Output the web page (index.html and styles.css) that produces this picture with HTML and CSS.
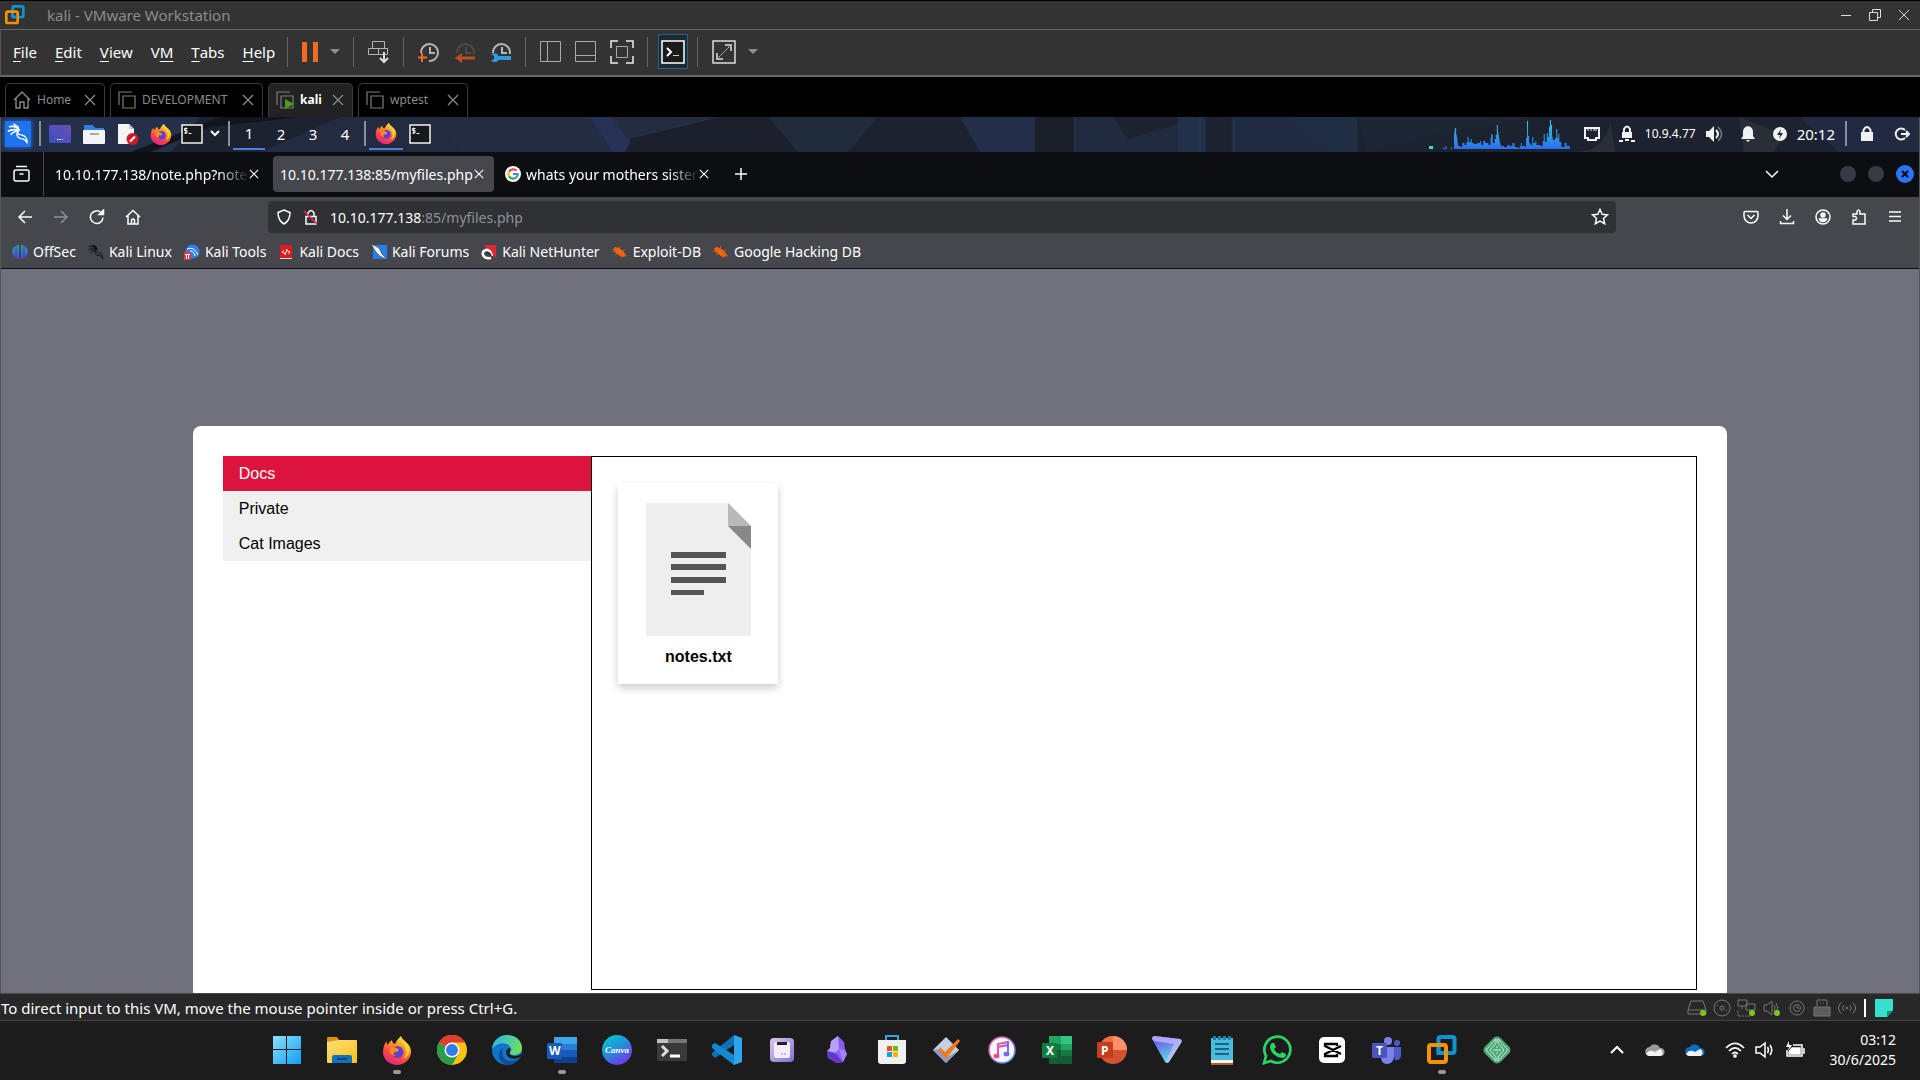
FILE: index.html
```html
<!DOCTYPE html>
<html lang="en">
<head>
  <meta charset="utf-8">
  <title>kali - VMware Workstation</title>
  <link rel="stylesheet" href="styles.css">
</head>
<body>
  <!-- shared icons -->
  <svg class="sprite" aria-hidden="true">
    <defs>
      <linearGradient id="fox-body" x1="0.8" y1="0" x2="0.3" y2="1">
        <stop offset="0" stop-color="#fff04a"/>
        <stop offset="0.35" stop-color="#ff9a1f"/>
        <stop offset="0.7" stop-color="#ff4345"/>
        <stop offset="1" stop-color="#e0208a"/>
      </linearGradient>
      <linearGradient id="cpu" x1="0" y1="0" x2="0" y2="1">
        <stop offset="0" stop-color="#35d3d6"/>
        <stop offset="1" stop-color="#2a6ff0"/>
      </linearGradient>
      <linearGradient id="win" x1="0" y1="0" x2="1" y2="1">
        <stop offset="0" stop-color="#8be0fb"/>
        <stop offset="1" stop-color="#119df3"/>
      </linearGradient>
      <linearGradient id="folder" x1="0" y1="0" x2="1" y2="1">
        <stop offset="0" stop-color="#ffe07a"/>
        <stop offset="1" stop-color="#fcbf18"/>
      </linearGradient>
      <linearGradient id="edge-top" x1="0" y1="0.3" x2="1" y2="0.6">
        <stop offset="0" stop-color="#2bb6ea"/>
        <stop offset="1" stop-color="#6fe05a"/>
      </linearGradient>
      <linearGradient id="canva" x1="0.2" y1="0" x2="0.8" y2="1">
        <stop offset="0" stop-color="#00c9cc"/>
        <stop offset="0.5" stop-color="#2a86dd"/>
        <stop offset="1" stop-color="#7d2ae8"/>
      </linearGradient>
      <linearGradient id="lilac" x1="0" y1="0" x2="1" y2="1">
        <stop offset="0" stop-color="#e2c8ee"/>
        <stop offset="1" stop-color="#7d6fd0"/>
      </linearGradient>
      <linearGradient id="tunes" x1="0" y1="0" x2="1" y2="1">
        <stop offset="0" stop-color="#fb5b89"/>
        <stop offset="0.6" stop-color="#8d5bdc"/>
        <stop offset="1" stop-color="#3ea6f2"/>
      </linearGradient>
      <linearGradient id="proton" x1="0.2" y1="0" x2="0.6" y2="1">
        <stop offset="0" stop-color="#6d4aff"/>
        <stop offset="1" stop-color="#5fe6d0"/>
      </linearGradient>
      <linearGradient id="desk" x1="0" y1="1" x2="1" y2="0">
        <stop offset="0" stop-color="#3b4fc0"/>
        <stop offset="1" stop-color="#6b4fb8"/>
      </linearGradient>
      <linearGradient id="offsec" x1="0" y1="0" x2="0" y2="1">
        <stop offset="0" stop-color="#1fa7b0"/>
        <stop offset="1" stop-color="#5a3fd0"/>
      </linearGradient>
      <symbol id="i-vmware" viewBox="0 0 30 30">
        <rect x="11.500" y="2" width="16" height="16" rx="2" fill="none" stroke="#0f94d2" stroke-width="4"/>
        <rect x="2" y="10" width="17" height="17" rx="2" fill="none" stroke="#f39109" stroke-width="4"/>
        <path d="M11.500 12v6H17" fill="none" stroke="#0f94d2" stroke-width="4"/>
      </symbol>
      <symbol id="i-firefox" viewBox="0 0 30 30">
        <path d="M19 1c1 3 3 4 6 7 3 3 4.500 6 4 10-1 7-7 12-14 12S1.500 25 1 18c-.3-5 1.500-9 3.500-12 0 2 .5 3 1.500 4 1-3 3-4 4-5 0 2 1 3.500 3 4 2-4 3-5 6-8z" fill="url(#fox-body)"/>
        <circle cx="15.500" cy="17" r="6" fill="#5b3fd6"/>
        <path d="M8 13c3-1.500 6-1 8 1 2 1.500 0 3-3 3-2 0-2 3 1 4-4 0-7-3-6-8z" fill="#ff8a1e"/>
        <path d="M20 4c0 6 4 7 4 13 0 3-1 5-3 7 6-2 8-8 6-13-2-4-6-4-7-7z" fill="#ffd93b" opacity=".75"/>
      </symbol>
      <symbol id="i-term" viewBox="0 0 22 20">
        <rect x="1" y="1" width="20" height="18" fill="#16181a" stroke="#f2f2f2" stroke-width="1.500"/>
        <path d="M6.500 4.500h-3v2h2.500v2.500H3.300M4.800 3.500v6.500M7.500 9.500h3" fill="none" stroke="#f2f2f2"/>
      </symbol>
      <symbol id="i-x" viewBox="0 0 12 12">
        <path d="M1 1l10 10M11 1L1 11" fill="none" stroke="currentColor" stroke-width="1.300"/>
      </symbol>
      <symbol id="i-down" viewBox="0 0 12 8">
        <path d="M0 1h12L6 7z" fill="#8f8f8f"/>
      </symbol>
      <symbol id="i-vm" viewBox="0 0 18 18">
        <path d="M14 1H1v13M5 5h12v12H5z" fill="none" stroke="#7c7c7c" stroke-width="1.200"/>
      </symbol>
      <symbol id="i-clock" viewBox="0 0 22 22">
        <path d="M3 12a8.500 8.500 0 1 1 8 8M12 6v6h5" fill="none" stroke="currentColor" stroke-width="2"/>
      </symbol>
      <symbol id="i-bug" viewBox="0 0 16 16">
        <path d="M1 5l2-2 4 1 4 3 3 4-2 2-4-1-4-3z" fill="#f0640f"/>
        <path d="M0 7l4 1M3 11l3-2M13 5l-2 2M15 12l-3-1M10 14l-1-3M8 2L7 5" stroke="#d9580c" fill="none"/>
      </symbol>
      <symbol id="i-dragon" viewBox="0 0 24 24">
        <path d="M2 4c5-1 9 0 12 4M1 9c5-3 9-2 13-1M4 13c2-3 5-4 8-4M7 1l6 4" fill="none" stroke="currentColor" stroke-width="1.700"/>
        <path d="M13 8c-3 2-1 5 3 5 4 1 6 4 6 9-2-4-4-5-7-5-4-1-6-5-2-9z" fill="none" stroke="currentColor" stroke-width="1.500"/>
      </symbol>
      <symbol id="i-cloud" viewBox="0 0 20 14">
        <path d="M5 13a4.500 4.500 0 0 1-.5-9A6 6 0 0 1 15 5a4 4 0 0 1 1 8z" fill="currentColor"/>
        <path d="M1 11c2-3 4-4 7-3l2 1 5-3a4 4 0 0 1 1 7H5c-2 0-3-.5-4-2z" class="cloud-front"/>
      </symbol>
      <symbol id="i-sound" viewBox="0 0 20 18">
        <path d="M1 6h4l5-4v14l-5-4H1z" fill="none" stroke="currentColor" stroke-width="1.500"/>
        <path d="M12.500 6q2 3 0 6M15 4q3.500 5 0 10" fill="none" stroke="currentColor" stroke-width="1.500"/>
      </symbol>
    </defs>
  </svg>

  <header class="titlebar">
    <svg class="logo"><use href="#i-vmware"/></svg>
    <span>kali - VMware Workstation</span>
    <div class="window-buttons">
      <button aria-label="Minimize"><svg width="12" height="12"><path d="M1 6.500h10" stroke="#ddd"/></svg></button>
      <button aria-label="Restore"><svg width="12" height="12" fill="none" stroke="#ddd"><path d="M3.500 3V.5h8v8H9M.5 3.500h8v8h-8z"/></svg></button>
      <button aria-label="Close"><svg width="12" height="12" fill="none" stroke="#ddd"><path d="M1 1l10 10M11 1L1 11"/></svg></button>
    </div>
  </header>

  <nav class="toolbar">
    <div class="menu">
      <button><u>F</u>ile</button>
      <button><u>E</u>dit</button>
      <button><u>V</u>iew</button>
      <button>V<u>M</u></button>
      <button><u>T</u>abs</button>
      <button><u>H</u>elp</button>
    </div>
    <div class="tools">
      <button aria-label="Pause"><svg width="16" height="20" fill="#f26a1b"><path d="M0 0h5v20H0zM11 0h5v20h-5z"/></svg></button>
      <button class="drop" aria-label="Power options"><svg width="10" height="7"><use href="#i-down"/></svg></button>
    </div>
    <div class="tools">
      <button aria-label="Send Ctrl+Alt+Del"><svg width="22" height="24" fill="none" stroke="#b5b5b5"><path d="M4.500 8.500v-7h12v7M.5 8.500h10v6H.5zM10.500 8.500h9v6h-9z"/><path d="M16 12v9M12 18l4 4 4-4" stroke="#ddd" stroke-width="2"/></svg></button>
    </div>
    <div class="tools history">
      <button aria-label="Take snapshot"><svg class="clock" width="22" height="22"><use href="#i-clock"/><path d="M4 12v9M0 16.500h9" stroke="#e86c2a" stroke-width="2"/></svg></button>
      <button aria-label="Revert snapshot"><svg class="clock dim" width="22" height="22"><use href="#i-clock"/><path d="M0 13h22v9H0z" fill="#333"/><path d="M6 17h15" stroke="#b9501f" stroke-width="3"/><path d="M8 12v10l-7-5z" fill="#b9501f"/></svg></button>
      <button aria-label="Manage snapshots"><svg class="clock" width="22" height="22"><use href="#i-clock"/><path d="M0 13h22v9H0z" fill="#333"/><path d="M6 17h15" stroke="#2f9bdc" stroke-width="4"/><path d="M1 13q5-2 7 1v6q-3 2-7 0l3-2v-3z" fill="#2f9bdc"/></svg></button>
    </div>
    <div class="tools views">
      <button aria-label="Show library"><svg width="21" height="22" fill="none" stroke="#aaa"><path d="M.5.5h20v20H.5zM7.500.5v20"/></svg></button>
      <button aria-label="Show thumbnails"><svg width="21" height="22" fill="none" stroke="#aaa"><path d="M.5.5h20v20H.5zM.5 14.500h20"/></svg></button>
      <button aria-label="Full screen"><svg width="24" height="24" fill="none" stroke="#eee"><path d="M8 1H1v7M16 1h7v7M1 16v7h7M23 16v7h-7" stroke-width="1.500"/><path d="M6.500 6.500h11v11h-11z" stroke="#aaa"/></svg></button>
    </div>
    <div class="tools">
      <button class="active" aria-label="Console view"><svg width="24" height="24" fill="none"><path d="M1 1h22v22H1z" fill="#1b1b1b" stroke="#fff" stroke-width="1.500"/><path d="M6 8l4 4-4 4" stroke="#fff" stroke-width="2"/><path d="M12 15.500h6" stroke="#ccc"/></svg></button>
    </div>
    <div class="tools">
      <button aria-label="Stretch guest"><svg width="24" height="24" fill="none" stroke="#ddd"><path d="M1 1h22v22H1z" stroke-width="1.500"/><path d="M5 13v6h6M13 5h6v6" stroke-width="1.500"/><path d="M5 19L19 5" stroke-dasharray="2 1"/></svg></button>
      <button class="drop" aria-label="Stretch options"><svg width="10" height="7"><use href="#i-down"/></svg></button>
    </div>
  </nav>

  <div class="vm-tabs">
    <div class="vm-tab home"><svg width="18" height="18" fill="none" stroke="#8a8a8a" stroke-width="1.400"><path d="M1 9l8-8 8 8M3 7.500V17h4v-6h4v6h4V7.500"/></svg><a href="#">Home</a><button aria-label="Close Home"><svg><use href="#i-x"/></svg></button></div>
    <div class="vm-tab dev"><svg width="18" height="18"><use href="#i-vm"/></svg><a href="#">DEVELOPMENT</a><button aria-label="Close DEVELOPMENT"><svg><use href="#i-x"/></svg></button></div>
    <div class="vm-tab current"><svg width="18" height="18"><use href="#i-vm"/><path d="M9 8l9 5-9 5z" fill="#4e9a20"/></svg><a href="#">kali</a><button aria-label="Close kali"><svg><use href="#i-x"/></svg></button></div>
    <div class="vm-tab test"><svg width="18" height="18"><use href="#i-vm"/></svg><a href="#">wptest</a><button aria-label="Close wptest"><svg><use href="#i-x"/></svg></button></div>
  </div>

  <main class="guest">
    <div class="panel">
      <svg class="wallpaper" viewBox="0 0 1920 35" preserveAspectRatio="none">
        <path d="M0 0h200l-30 35H0z" fill="#24304a"/>
        <path d="M150 35l60-25 90-10h-80l-90 35z" fill="#11151d"/>
        <path d="M260 35L340 0h95l25 35z" fill="#222b40"/>
        <path d="M432 0h290l-92 22-5 13H460z" fill="#232c40"/>
        <path d="M590 0h20l20 25-6 10h-12z" fill="#263257"/>
        <path d="M630 22L720 0h50l25 35H628z" fill="#1c202c"/>
        <path d="M768 0h110l-30 35h-50z" fill="#202b3c"/>
        <path d="M960 0h75v35h-55z" fill="#232e4a"/>
        <path d="M1035 0h40v35h-40z" fill="#1b1f29"/>
        <path d="M1075 0h38l15 22 50-15V35h-103z" fill="#1f2a3e"/>
        <path d="M1178 0h28v35h-28z" fill="#22304a"/>
        <path d="M1232 0h56l50 35h-106z" fill="#202b42"/>
        <path d="M1288 0h70v35h-24z" fill="#1f2e42"/>
        <path d="M1358 0h180l-110 20-60 15z" fill="#1d2634"/>
        <path d="M1575 35q30 0 36-30l5 30zM1740 0l45 18-10 17h-30z" fill="#2a2e36"/>
        <path d="M1800 0h120v35h-80z" fill="#212a40"/>
        <path d="M1075 0v35M1200 0v35M1234 0v35" stroke="#2d3a52"/>
      </svg>
      <button class="kali-menu" aria-label="Applications"><svg width="22" height="24"><use href="#i-dragon"/></svg></button>
      <div class="launchers">
        <button aria-label="Show desktop"><svg width="22" height="18"><rect width="22" height="18" rx="1" fill="url(#desk)"/><path d="M8 14.500h6" stroke="#fff" stroke-dasharray="1.500 1"/></svg></button>
        <button aria-label="File manager"><svg width="24" height="22"><path d="M2 2h9l2 3h9v6H2z" fill="#2f7de8"/><rect x="1" y="7" width="22" height="14" rx="1" fill="#f4f4f6"/><path d="M8 11h9" stroke="#aaa" stroke-width="2"/></svg></button>
        <button aria-label="Text editor"><svg width="22" height="22"><path d="M1 1h11l5 5v15H1z" fill="#f5f5f5"/><path d="M12 1v5h5z" fill="#c9c9c9"/><circle cx="15.500" cy="16" r="6" fill="#cf1b25"/><path d="M13 18.500l5-5" stroke="#fff" stroke-width="2"/></svg></button>
        <button aria-label="Firefox"><svg width="22" height="22"><use href="#i-firefox"/></svg></button>
        <button class="term" aria-label="Terminal"><svg width="22" height="20"><use href="#i-term"/></svg></button>
        <button class="more" aria-label="More terminals"><svg width="10" height="8" fill="none" stroke="#fff" stroke-width="2"><path d="M1 1l4 4 4-4"/></svg></button>
      </div>
      <div class="workspaces">
        <button class="on">1</button>
        <button>2</button>
        <button>3</button>
        <button>4</button>
      </div>
      <div class="tasks">
        <button class="on" aria-label="Firefox window"><svg width="22" height="22"><use href="#i-firefox"/></svg></button>
        <button aria-label="Terminal window"><svg width="22" height="20"><use href="#i-term"/></svg></button>
      </div>
      <div class="status">
        <svg class="cpu" width="146" height="32" viewBox="0 0 140 32" preserveAspectRatio="none">
          <path d="M0 28h4v3H0z" fill="#2fe0c0"/>
          <path fill="url(#cpu)" d="M13 31v-1h3v-2h1v3h4v-2h1v2h2V17l1-7h1v5l1 5 1 8h2v1h2v-4h2v2h2v-3h1v-5h1v5h2v-3h1v4h2v1h3v-1h3v-2h1v4h2v-4h2v2h3v2h2v-6l1-5h1v9h2v-4h1v-4h1V7h1v5l1 6 1 6 1 4h3v1h3v-2h2v1h3v-3h2v4h3v1h2v-2h1v-3h1v3h3v1h1v-9h1V3h1v15h1v6l2 3h1v-8h1v6h2v-2h1v4h4v1h2v-5h1v-7h1v8h2V15h1v4h1V9h1V2h1v5h1v10l1 5h2v-2h1v-9h1v9h1v-4h1v8h2v5h3v-4h2v3h3v3z"/>
        </svg>
        <svg class="net" width="18" height="16" fill="none" stroke="#f1f1f1" stroke-width="2"><path d="M2 2h14v10h-3v2H5v-2H2z"/><path d="M5 2v3M8 2v3M11 2v3M13 2v3" stroke-width="1"/></svg>
        <svg class="vpn" width="16" height="18"><path d="M3 7h10v6H3z" fill="#f1f1f1"/><path d="M5 8V4q3-5 6 0v4" fill="none" stroke="#f1f1f1" stroke-width="2"/><path d="M0 16h4M6 15h4M12 16h4" stroke="#f1f1f1" stroke-width="2"/></svg>
        <span class="ip">10.9.4.77</span>
        <svg class="vol" width="18" height="18"><path d="M1 6h3l5-5v16l-5-5H1z" fill="#f1f1f1"/><path d="M11 5q4 4 0 8" fill="none" stroke="#f1f1f1" stroke-width="2"/><path d="M13 2q7 7 0 14" fill="none" stroke="#777" stroke-width="1.500"/></svg>
        <svg class="bell" width="14" height="16" fill="#f1f1f1"><path d="M7 0q5 1 5 6v4l2 3H0l2-3V6q0-5 5-6zM5 14h4l-2 2z"/></svg>
        <svg class="bolt" width="14" height="16"><circle cx="7" cy="8" r="7" fill="#f1f1f1"/><path d="M8 3L4 9h3l-1 4 4-6H7z" fill="#1d2433"/></svg>
        <span class="time">20:12</span>
        <svg class="lock" width="14" height="18"><path d="M1 7h12v9H1z" fill="#f1f1f1"/><path d="M3.500 8V5q3.500-6 7 0v3" fill="none" stroke="#f1f1f1" stroke-width="2"/></svg>
        <svg width="16" height="16" fill="none" stroke="#f1f1f1" stroke-width="2"><path d="M11 4a5.500 5.500 0 1 0 0 8M7 8h7M12 5l3 3-3 3"/></svg>
      </div>
    </div>

    <div class="ff-tabs">
      <button class="ff-view" aria-label="Firefox View"><svg width="18" height="18" fill="none" stroke="#fbfbfe" stroke-width="1.500"><rect x="1" y="5" width="15" height="11" rx="2"/><path d="M3 1.500h11M6.500 9h4"/></svg></button>
      <div class="ff-tab"><a href="#">10.10.177.138/note.php?note_</a><button aria-label="Close tab"><svg><use href="#i-x"/></svg></button></div>
      <div class="ff-tab selected"><a href="#">10.10.177.138:85/myfiles.php</a><button aria-label="Close tab"><svg><use href="#i-x"/></svg></button></div>
      <div class="ff-tab"><svg class="favicon" viewBox="0 0 16 16"><circle cx="8" cy="8" r="8" fill="#fff"/><g fill="none" stroke-width="2.200"><path d="M11.500 4.700A4.700 4.700 0 0 0 4 5.700" stroke="#ea4335"/><path d="M4 5.700a4.700 4.700 0 0 0 0 4.600" stroke="#fbbc05"/><path d="M4 10.300a4.700 4.700 0 0 0 7.200 1.200" stroke="#34a853"/><path d="M11.200 11.500A4.700 4.700 0 0 0 12.700 8H8" stroke="#4285f4"/></g></svg><a href="#">whats your mothers sister</a><button aria-label="Close tab"><svg><use href="#i-x"/></svg></button></div>
      <button class="ff-new" aria-label="New tab"><svg width="14" height="14" stroke="#fbfbfe" stroke-width="1.500"><path d="M7 1v12M1 7h12"/></svg></button>
      <div class="ff-window">
        <button aria-label="List all tabs"><svg width="14" height="10" fill="none" stroke="#fbfbfe" stroke-width="1.500"><path d="M1 2l6 6 6-6"/></svg></button>
        <button class="dot" aria-label="Minimize"></button>
        <button class="dot" aria-label="Maximize"></button>
        <button class="dot close" aria-label="Close"><svg width="8" height="8" stroke="#0c0e12" stroke-width="2"><path d="M1 1l6 6M7 1L1 7"/></svg></button>
      </div>
    </div>

    <div class="ff-nav">
      <div class="ff-buttons">
        <button aria-label="Back"><svg width="16" height="16"><path d="M15 8H2M8 2L2 8l6 6"/></svg></button>
        <button class="off" aria-label="Forward"><svg width="16" height="16"><path d="M1 8h13M8 2l6 6-6 6"/></svg></button>
        <button aria-label="Reload"><svg width="16" height="16"><path d="M14 8.500A6.300 6.300 0 1 1 12 3.500"/><path d="M10 5.500h4.500V1z" fill="#fbfbfe"/></svg></button>
        <button aria-label="Home"><svg width="16" height="16"><path d="M1 8l7-6.500L15 8M3 6.500V15h10V6.500M6.500 15v-4q1.500-2 3 0v4"/></svg></button>
      </div>
      <div class="urlbar">
        <svg width="16" height="16"><path d="M8 1l6 2.500c0 6-1.500 9-6 11.500C3.500 12.500 2 9.500 2 3.500z"/></svg>
        <svg width="16" height="16"><path d="M3 7.500h10V15H3zM5 7V4q3-5 6 0v3"/><path d="M1 2l13 13" stroke="#e22850" stroke-width="1.700"/></svg>
        <a href="#">10.10.177.138<span>:85/myfiles.php</span></a>
        <button aria-label="Bookmark this page"><svg width="18" height="18"><path d="M9 1.500l2.200 4.800 5.300.6-4 3.500 1.200 5.300L9 13l-4.700 2.700 1.200-5.300-4-3.500 5.300-.6z"/></svg></button>
      </div>
      <div class="ff-buttons right">
        <button aria-label="Save to Pocket"><svg width="16" height="16"><path d="M2 2.500h12q1 0 1 1V7a7 7 0 0 1-14 0V3.500q0-1 1-1zM4.500 6L8 9.500 11.500 6"/></svg></button>
        <button aria-label="Downloads"><svg width="16" height="16"><path d="M8 0v10M4 6.500l4 4 4-4M1.500 12v2.500h13V12"/></svg></button>
        <button aria-label="Account"><svg width="16" height="16"><circle cx="8" cy="8" r="7"/><circle cx="8" cy="6" r="2" fill="#fbfbfe"/><path d="M4.500 10h7q-1 2.500-3.500 2.500T4.500 10z" fill="#fbfbfe"/></svg></button>
        <button aria-label="Extensions"><svg width="16" height="16"><path d="M2 15V11h2.500q2-2 0-3.500H2V5h4V2.500q1.500-3 3 0V5h5v10z"/></svg></button>
        <button aria-label="Menu"><svg width="16" height="16"><path d="M2 3h12M2 7.500h12M2 12h12"/></svg></button>
      </div>
    </div>

    <div class="bookmarks">
      <a href="#"><svg viewBox="0 0 16 16"><path d="M7 1v14A7 7 0 0 1 7 1zM9 1v14A7 7 0 0 0 9 1z" fill="url(#offsec)"/><path d="M4 2v12M12 2v12" stroke="#2f4fa0"/></svg>OffSec</a>
      <a href="#"><svg class="dark" viewBox="0 0 16 16"><use href="#i-dragon" width="16" height="16"/></svg>Kali Linux</a>
      <a href="#"><svg viewBox="0 0 16 16"><circle cx="8.500" cy="7.500" r="7" fill="#2d7ff0"/><path d="M3 5q7-3 11 6M6 7q4 0 5 5" stroke="#fff" fill="none"/><rect y="8" width="7" height="8" rx="1" fill="#e53a3a"/><path d="M1 10.500h5M2.500 11v4M4.500 11v4" stroke="#fff"/></svg>Kali Tools</a>
      <a href="#"><svg viewBox="0 0 16 16"><path d="M2 1h12v14H2z" fill="#e01b1b"/><path d="M2 14.500h12" stroke="#ddd"/><path d="M6 6L4 8l3 1.500M10 10l2-2-3-1.500M9 5l-2 6" stroke="#fff" fill="none"/></svg>Kali Docs</a>
      <a href="#"><svg viewBox="0 0 16 16"><path d="M2 1h14v14H2z" fill="#2280ee"/><path d="M0 0l8 4 3 6 5 6-7-4-4-4z" fill="#fff" stroke="#222" stroke-width=".5"/></svg>Kali Forums</a>
      <a href="#"><svg viewBox="0 0 16 16"><path d="M3 1h12v13l-3-3z" fill="#e32636"/><path d="M11 12Q9 5 5 6T2 11q2 4 8 3" fill="none" stroke="#fff" stroke-width="2.500"/><path d="M6 9q3-1 4 3" fill="none" stroke="#222" stroke-width="1.500"/></svg>Kali NetHunter</a>
      <a href="#"><svg><use href="#i-bug"/></svg>Exploit-DB</a>
      <a href="#"><svg><use href="#i-bug"/></svg>Google Hacking DB</a>
    </div>

    <div class="page">
      <div class="card">
        <nav class="folders">
          <button class="open">Docs</button>
          <button>Private</button>
          <button>Cat Images</button>
        </nav>
        <section class="files">
          <a class="file" href="#">
            <svg viewBox="0 0 105 133" preserveAspectRatio="none">
              <path d="M0 0h82l23 23v110H0z" fill="#eee"/>
              <path d="M82 0l23 23H82z" fill="#b9b9b9"/>
              <path d="M82 23h23v23z" fill="#888"/>
              <path d="M25 49h55v6H25zM25 61h55v6H25zM25 74h55v6H25zM25 87h33v5H25z" fill="#555"/>
            </svg>
            <b>notes.txt</b>
          </a>
        </section>
      </div>
    </div>
  </main>

  <div class="vm-status">
    <span>To direct input to this VM, move the mouse pointer inside or press Ctrl+G.</span>
    <div class="devices">
      <svg width="20" height="18"><path d="M4 2h12l3 9v4H1v-4zM1 11h18"/><circle class="led" cx="16" cy="14" r="3"/></svg>
      <svg width="20" height="18"><circle cx="10" cy="9" r="8"/><circle cx="10" cy="9" r="2"/><path d="M5 7l1-1M14 12l1-1"/></svg>
      <svg width="20" height="18"><path d="M1 1h9v6H1zM9 5h9v6H9zM5 7v3M13 11v3"/><path d="M1 12v5h12" stroke-dasharray="2 1"/><circle class="led" cx="15" cy="14" r="3"/></svg>
      <svg width="20" height="18"><path d="M2 6h3l5-4v14l-5-4H2zM12 6q2 3 0 6M14 4q3 4 1 8"/><circle class="led" cx="15" cy="14" r="3"/></svg>
      <svg width="20" height="18"><circle cx="10" cy="9" r="7"/><circle cx="10" cy="9" r="3.500"/><path d="M10 7v2h2"/></svg>
      <svg width="20" height="18"><path d="M5 7V1h10v6M8 4h1M11 4h1"/><path d="M2 8h16v9H2z" fill="#5c5c5c"/></svg>
      <svg width="20" height="18"><circle cx="10" cy="9" r="1"/><path d="M7 6q-3 3 0 6M13 6q3 3 0 6M4 3.500q-5 5.500 0 11M16 3.500q5 5.500 0 11"/></svg>
    </div>
    <button class="note" aria-label="Message log"><svg width="18" height="18"><path d="M0 0h18v11l-6 7H0z" fill="#35e0cc"/><path d="M12 18v-6h6z" fill="#1d8b7e"/></svg></button>
  </div>

  <footer class="taskbar">
    <div class="apps">
      <button aria-label="Start"><svg viewBox="0 0 30 30"><path d="M1 1h13v13H1zM15 1h14v13H15zM1 15h13v14H1zM15 15h14v14H15z" fill="url(#win)"/></svg></button>
      <button aria-label="File Explorer"><svg viewBox="0 0 30 30"><path d="M0 3q0-1 1-1h9l3 4v5H0z" fill="#d9940e"/><path d="M0 7l12-2h17q1 0 1 1v21q0 1-1 1H1q-1 0-1-1z" fill="url(#folder)"/><path d="M5 28v-6q0-2 2-2h16q2 0 2 2v6z" fill="#1272b8"/><path d="M10 24h10" stroke="#0a4a80" stroke-width="2"/></svg></button>
      <button class="running" aria-label="Firefox"><svg viewBox="0 0 30 30"><use href="#i-firefox"/></svg></button>
      <button aria-label="Chrome"><svg viewBox="0 0 30 30"><circle cx="15" cy="15" r="15" fill="#fbc116"/><path d="M15 15L2 7.500A15 15 0 0 1 28 7.500H15z" fill="#e33b2e"/><path d="M2 7.500A15 15 0 0 0 15 30l6.500-11.200L15 15z" fill="#2a9c4a"/><circle cx="15" cy="15" r="7.500" fill="#fff"/><circle cx="15" cy="15" r="6" fill="#2f7bea"/></svg></button>
      <button aria-label="Edge"><svg viewBox="0 0 30 30"><circle cx="15" cy="15" r="15" fill="#1273cf"/><path d="M0 14C1 5 8 0 15 0c9 0 15 6 15 13 0 5-4 7-8 7-3 0-4-1-4-2 0-1 2-2 1-5-3-6-13-7-19 1z" fill="url(#edge-top)"/><path d="M11 13c-3 8 3 14 9 13 4 0 6-2 8-4-3 6-8 8-13 8-6-1-9-7-8-11 0-3 2-5 4-6z" fill="#124d93"/><path d="M18 13c2 4-3 4 1 7 3 2 8 1 10-1 1 1-1 3-3 4-6 2-12-1-12-6 0-2 2-4 4-4z" fill="#1c1c1c"/></svg></button>
      <button class="running" aria-label="Word"><svg viewBox="0 0 30 30"><path d="M7 2h23v7H7z" fill="#41a5ee"/><path d="M7 9h23v6H7z" fill="#2b7cd3"/><path d="M7 15h23v7H7z" fill="#185abd"/><path d="M7 22h23v6H7z" fill="#103f91"/><rect y="8" width="15" height="16" rx="1" fill="#185abd"/><text x="2" y="20">W</text></svg></button>
      <button aria-label="Canva"><svg viewBox="0 0 30 30"><circle cx="15" cy="15" r="15" fill="url(#canva)"/><text class="script" x="3" y="18">Canva</text></svg></button>
      <button aria-label="Command Prompt"><svg viewBox="0 0 30 30"><path d="M0 4h30v22H0z" fill="#3a3a3a"/><path d="M0 4h30v4H0z" fill="#767676"/><path d="M0 4h11v4H0z" fill="#c2c2c2"/><path d="M5 11l5 5-5 5" fill="none" stroke="#ddd" stroke-width="3"/><path d="M13 21h10" stroke="#fff" stroke-width="3"/></svg></button>
      <button aria-label="Visual Studio Code"><svg viewBox="0 0 30 30"><path d="M22 0l8 3v24l-8 3z" fill="#30a4ec"/><path d="M22 0v10L3 23l-3-3v-2z" fill="#0d72b8"/><path d="M22 30V20L3 8 0 10v3z" fill="#1389d4"/></svg></button>
      <button aria-label="Scratchpad"><svg viewBox="0 0 30 30"><rect x="3" y="3" width="24" height="24" rx="4" fill="url(#lilac)"/><rect x="7" y="7" width="16" height="16" rx="2" fill="#f2eef8"/><path d="M10 7h10v3H10z" fill="#222"/><path d="M14 19h6" stroke="#c6c2d2" stroke-width="2" stroke-dasharray="2 1"/></svg></button>
      <button aria-label="Obsidian"><svg viewBox="0 0 30 30"><path d="M16 1l6 6 1 7 2 5-4 8-6 1-9-5-1-6 3-3 1-7z" fill="#8b5cf0"/><path d="M16 1l1 13-4 4-8-2 3-3 1-7z" fill="#b9a0f7"/><path d="M13 18l8 9-6 1-9-5-1-7z" fill="#6537cf"/><path d="M17 14l6 2 2 3-4 8z" fill="#a384f5"/></svg></button>
      <button aria-label="Microsoft Store"><svg viewBox="0 0 30 30"><path d="M9 5V1h12v4" fill="none" stroke="#33a7df" stroke-width="2"/><path d="M1 5h28v21q0 3-3 3H4q-3 0-3-3z" fill="#f0f0f0"/><path d="M10 11h5v5h-5z" fill="#ef4e23"/><path d="M16 11h5v5h-5z" fill="#7db700"/><path d="M10 17h5v5h-5z" fill="#1a9fe0"/><path d="M16 17h5v5h-5z" fill="#fcb40a"/></svg></button>
      <button aria-label="Tasks"><svg viewBox="0 0 30 30"><path d="M14 2l13 13-13 13L1 15z" fill="#c5cfe4"/><path d="M14 28L1 15l6-1 7 9 13-8z" fill="#8c9ac0"/><path d="M8 12l5 5L26 4l2 2-14 18-7-9z" fill="#f27a13"/></svg></button>
      <button aria-label="iTunes"><svg viewBox="0 0 30 30"><circle cx="15" cy="15" r="13" fill="#f8f4fa" stroke="url(#tunes)" stroke-width="1.500"/><path d="M11 21V9l10-2v12M11 12l10-2" fill="none" stroke="url(#tunes)" stroke-width="2"/><ellipse cx="9.500" cy="21" rx="3" ry="2.300" fill="#e2508f"/><ellipse cx="19.500" cy="19" rx="3" ry="2.300" fill="#6c6fe0"/></svg></button>
      <button aria-label="Excel"><svg viewBox="0 0 30 30"><path d="M7 1h23v28H7z" fill="#185c37"/><path d="M7 1h12v8H7z" fill="#21a366"/><path d="M19 1h11v8H19z" fill="#33c481"/><path d="M7 9h12v6H7z" fill="#107c41"/><path d="M19 9h11v6H19z" fill="#21a366"/><path d="M19 15h11v6H19z" fill="#107c41"/><rect y="8" width="15" height="15" rx="1" fill="#107c41"/><text x="4" y="20">X</text></svg></button>
      <button aria-label="PowerPoint"><svg viewBox="0 0 30 30"><circle cx="16" cy="15" r="14" fill="#d35230"/><path d="M16 15V1a14 14 0 0 0-14 14z" fill="#ed6c47"/><path d="M16 15V1a14 14 0 0 1 14 14z" fill="#ff8f6b"/><rect y="7" width="16" height="16" rx="1" fill="#c43e1c"/><text x="4" y="20">P</text></svg></button>
      <button aria-label="Proton VPN"><svg viewBox="0 0 30 30"><path d="M0 4q0-3 3-3l25 3q3 1 1 4L17 27q-2 2-4 0z" fill="url(#proton)"/><path d="M0 4q0-3 3-3l25 3q3 1 1 4L17 27l-2 1-1-2L22 9 2 6z" fill="#c9bcf9" opacity=".75"/></svg></button>
      <button aria-label="Notepad"><svg viewBox="0 0 30 30"><path d="M4 3h22v22H4z" fill="#4bbbd9"/><path d="M4 25h22v3H4z" fill="#f5f5f5"/><path d="M4 28h22v2H4z" fill="#a8641c"/><path d="M8 9h14M8 14h14M8 19h14" stroke="#17658a" stroke-width="2"/><path d="M6 3h19" stroke="#1684b0" stroke-width="4" stroke-dasharray="3 2"/></svg></button>
      <button aria-label="WhatsApp"><svg viewBox="0 0 30 30"><path d="M2 28l2-7a13 13 0 1 1 5 5z" fill="none" stroke="#2bd366" stroke-width="2.700"/><path d="M10 8l2 0 2 4-2 2q2 4 6 5l2-2 4 2q0 4-4 4Q9 21 8 12q0-3 2-4z" fill="#2bd366"/></svg></button>
      <button aria-label="CapCut"><svg viewBox="0 0 30 30"><rect x="2" y="2" width="26" height="26" rx="5" fill="#fff"/><path d="M24 11L8 19v2h12v-2M24 19L8 11V9h12v2" fill="none" stroke="#000" stroke-width="2.300"/></svg></button>
      <button aria-label="Teams"><svg viewBox="0 0 30 30"><circle cx="25" cy="8" r="3" fill="#5059c9"/><circle cx="16" cy="6" r="4" fill="#7b83eb"/><path d="M20 12h9v9q-1 5-6 4z" fill="#5059c9"/><path d="M9 12h13v10q-1 7-7 7t-6-7z" fill="#7b83eb"/><rect y="8" width="15" height="15" rx="1" fill="#4b53bc"/><text x="4" y="20">T</text></svg></button>
      <button class="running" aria-label="VMware Workstation"><svg viewBox="0 0 30 30"><use href="#i-vmware"/></svg></button>
      <button aria-label="Diamond"><svg viewBox="0 0 30 30"><rect x="4" y="4" width="22" height="22" rx="5" transform="rotate(45 15 15)" fill="#4ea877"/><path d="M14 4L4 15l10 11v-4l-6-7 6-7zM16 4l10 11-10 11v-4l6-7-6-7zM11 15h8M15 11v2M15 17v2" fill="none" stroke="#c8f0d6"/></svg></button>
    </div>
    <div class="tray">
      <button aria-label="Show hidden icons"><svg width="16" height="16" fill="none" stroke="#fff" stroke-width="2"><path d="M2 11l6-6 6 6"/></svg></button>
      <button aria-label="Cloud"><svg class="grey" width="20" height="14"><use href="#i-cloud"/></svg></button>
      <button aria-label="OneDrive"><svg class="blue" width="20" height="14"><use href="#i-cloud"/></svg></button>
      <div class="quick">
        <svg width="20" height="16" fill="none" stroke="#fff" stroke-width="1.700"><path d="M1 6q9-9 18 0M4 9q6-6 12 0M7 12q3-3 6 0"/><circle cx="10" cy="14" r="1" fill="#fff"/></svg>
        <svg width="20" height="18"><use href="#i-sound"/></svg>
        <svg width="20" height="18" fill="none" stroke="#fff" stroke-width="1.500"><path d="M8 4h9v11H2v-6M18 8h1v4h-1"/><path d="M7 7h8v6H4v-2z" fill="#fff"/><path d="M4 0L1 6h3L3 10l4-6H4z" fill="#fff" stroke="none"/></svg>
      </div>
      <time>03:12<br>30/6/2025</time>
    </div>
  </footer>
</body>
</html>
```
FILE: styles.css
```css
* {
  box-sizing: border-box;
}

body {
  margin: 0;
  height: 100vh;
  display: flex;
  flex-direction: column;
  overflow: hidden;
  background: #000;
  color: #fff;
  font-family: "Noto Sans", sans-serif;
  font-size: 15px;
}

button {
  display: flex;
  align-items: center;
  justify-content: center;
  padding: 0;
  border: 0;
  background: none;
  color: inherit;
  font: inherit;
}

a {
  color: inherit;
  text-decoration: none;
}

svg {
  display: block;
  flex: none;
}

.sprite {
  position: absolute;
  width: 0;
  height: 0;
}

/* VMware window */
.titlebar {
  display: flex;
  align-items: center;
  height: 29px;
  padding: 0 10px 0 5px;
  border-top: 1px solid #000;
  background: #333;
  color: #8c8c8c;
}

.logo {
  width: 20px;
  height: 20px;
  margin-right: 22px;
}

.window-buttons {
  display: flex;
  gap: 17px;
  margin-left: auto;
}

.toolbar {
  display: flex;
  align-items: center;
  height: 48px;
  padding-bottom: 2px;
  border-top: 1px solid #666;
  border-bottom: 2px solid #666;
  border-left: 1px solid #555;
  background: #333;
}

.menu {
  display: flex;
  gap: 18px;
  padding: 0 12px;
}

.menu u {
  text-underline-offset: 3px;
}

.tools {
  display: flex;
  align-items: center;
  height: 30px;
  padding: 0 13px 0 14px;
  border-left: 1px solid #666;
}

.tools .drop {
  margin-left: 12px;
}

.history,
.views {
  gap: 14px;
}

.clock {
  color: #b5b5b5;
}

.dim {
  color: #4c4c4c;
}

.tools .active {
  height: 35px;
  margin: 0 -4px;
  padding: 0 2px;
  border: 1px solid #24658c;
  background: #1c2a33;
}

.vm-tabs {
  display: flex;
  align-items: flex-end;
  gap: 5px;
  height: 40px;
  padding-left: 5px;
  font-size: 12px;
  color: #8a8a8a;
}

.vm-tab {
  display: flex;
  align-items: center;
  height: 34px;
  padding: 0 8px 2px 7px;
  border: 1px solid #3a3a3a;
  border-bottom: 0;
  border-radius: 5px 5px 0 0;
}

.vm-tab a {
  flex: 1;
  margin-left: 6px;
}

.vm-tab button svg {
  width: 12px;
  height: 12px;
}

.home {
  width: 100px;
}

.dev {
  width: 153px;
}

.test {
  width: 110px;
}

.current {
  width: 85px;
  background: #222;
}

.current a {
  color: #fff;
  font-weight: bold;
}

/* guest desktop */
.guest {
  flex: 1;
  min-height: 0;
  display: flex;
  flex-direction: column;
  border-left: 1px solid #555;
  border-right: 1px solid #555;
}

.panel {
  position: relative;
  display: flex;
  align-items: center;
  height: 35px;
  padding: 0 9px 2px 4px;
  background: #1c2230;
}

.panel > * {
  position: relative;
}

.panel .wallpaper {
  position: absolute;
  inset: 0;
  width: 100%;
  height: 100%;
}

.kali-menu {
  width: 26px;
  height: 26px;
  background: #1d74ee;
  box-shadow: 0 0 5px #1d74ee;
}

.launchers {
  display: flex;
  align-items: center;
  gap: 11px;
  height: 25px;
  margin-left: 8px;
  padding: 0 8px;
  border-left: 2px solid #8b8f98;
  border-right: 2px solid #8b8f98;
}

.launchers .term {
  margin-left: -2px;
}

.launchers .more {
  margin-left: -4px;
}

.workspaces,
.tasks {
  display: flex;
  height: 100%;
}

.workspaces {
  margin-left: 3px;
}

.workspaces button {
  width: 32px;
}

.workspaces .on,
.tasks .on {
  border-bottom: 2px solid #4b7fe0;
}

.tasks {
  margin-left: 3px;
}

.tasks button {
  width: 34px;
}

.tasks::before {
  content: "";
  width: 2px;
  height: 25px;
  margin: 4px 3px 0 0;
  background: #8b8f98;
}

.status {
  display: flex;
  align-items: center;
  margin-left: auto;
}

.cpu {
  margin-right: 8px;
}

.net {
  margin-right: 18px;
}

.ip {
  margin: 0 9px 0 10px;
  font-size: 12px;
}

.vol,
.bell {
  margin-right: 18px;
}

.time {
  margin: 0 10px;
}

.lock {
  width: 29px;
  height: 25px;
  padding: 4px 0 3px 13px;
  margin-right: 20px;
  border-left: 2px solid #8b8f98;
}

/* browser */
.ff-tabs,
.ff-nav,
.bookmarks {
  font-size: 14px;
}

.ff-tabs {
  display: flex;
  align-items: center;
  height: 45px;
  padding: 0 5px 1px 0;
  background: #0c0e12;
}

.ff-view {
  width: 43px;
  height: 44px;
  margin-right: 4px;
  border-right: 1px solid #45464b;
}

.ff-tab {
  display: flex;
  align-items: center;
  width: 221px;
  height: 36px;
  margin-right: 4px;
  padding: 0 10px 0 7px;
  border-radius: 4px;
}

.ff-tab a {
  flex: 1;
  overflow: hidden;
  white-space: nowrap;
  mask-image: linear-gradient(to left, transparent, #000 30px);
}

.ff-tab.selected {
  background: #46474c;
}

.ff-tab.selected a {
  mask-image: none;
}

.ff-tab button svg {
  width: 10px;
  height: 10px;
}

.favicon {
  width: 16px;
  height: 16px;
  margin-right: 5px;
}

.ff-new {
  margin-left: 11px;
}

.ff-window {
  display: flex;
  align-items: center;
  gap: 12px;
  margin-left: auto;
}

.ff-window .dot {
  width: 16px;
  height: 16px;
  border-radius: 50%;
  background: #383b46;
}

.ff-window .dot:nth-child(2) {
  margin-left: 49px;
}

.ff-window .close {
  width: 18px;
  height: 18px;
  background: #2b74f5;
}

.ff-nav {
  display: flex;
  align-items: center;
  height: 40px;
  padding: 0 16px;
  background: #46474c;
}

.ff-nav svg {
  fill: none;
  stroke: #fbfbfe;
  stroke-width: 1.5px;
}

.ff-buttons {
  display: flex;
  gap: 20px;
  width: 251px;
}

.ff-buttons.right {
  width: 287px;
  justify-content: flex-end;
}

.off {
  opacity: 0.4;
}

.urlbar {
  flex: 1;
  display: flex;
  align-items: center;
  gap: 11px;
  height: 32px;
  padding: 0 7px 0 8px;
  border-radius: 4px;
  background: #303135;
}

.urlbar a {
  flex: 1;
}

.urlbar span {
  color: #8f9096;
}

.bookmarks {
  display: flex;
  align-items: center;
  gap: 12px;
  height: 32px;
  padding: 0 11px 2px;
  border-bottom: 1px solid #0c0e12;
  background: #46474c;
}

.bookmarks a {
  display: flex;
  align-items: center;
  gap: 5px;
}

.bookmarks svg {
  width: 16px;
  height: 16px;
}

.bookmarks .dark {
  color: #111;
}

/* file browser page */
.page {
  flex: 1;
  min-height: 0;
  padding: 157px 10% 0;
  overflow: hidden;
  background: #71717d;
  color: #000;
  font-family: "Liberation Sans", Arial, sans-serif;
  font-size: 16px;
}

.card {
  display: flex;
  align-items: flex-start;
  height: 600px;
  padding: 30px;
  border-radius: 8px;
  background: #fff;
}

.folders {
  width: 25%;
}

.folders button {
  justify-content: flex-start;
  width: 100%;
  height: 35px;
  padding: 0 16px;
  background: #f0f0f0;
}

.folders .open {
  background: #dc143c;
  color: #fff;
}

.files {
  flex: 1;
  height: 534px;
  padding: 26px;
  border: 1px solid #000;
}

.file {
  display: flex;
  flex-direction: column;
  align-items: center;
  width: 160px;
  height: 201px;
  padding-top: 20px;
  box-shadow: 0 4px 8px rgba(0, 0, 0, 0.2);
}

.file svg {
  width: 105px;
  height: 133px;
  margin-bottom: 12px;
}

/* bottom bars */
.vm-status {
  display: flex;
  align-items: center;
  height: 28px;
  padding: 1px 27px 0 1px;
  border-top: 1px solid #4a4a4a;
  border-bottom: 1px solid #444;
  background: #282828;
}

.devices {
  display: flex;
  gap: 5px;
  margin-left: auto;
  padding-right: 7px;
  border-right: 2px solid #fff;
}

.devices svg {
  fill: none;
  stroke: #777;
}

.devices .led {
  fill: #7dc51f;
  stroke: none;
}

.note {
  margin-left: 9px;
}

.taskbar {
  display: flex;
  align-items: center;
  height: 59px;
  padding: 0 24px 2px 259px;
  background: #1c1c1c;
}

.apps {
  display: flex;
  height: 100%;
}

.apps button {
  position: relative;
  width: 55px;
}

.apps svg {
  width: 30px;
  height: 30px;
}

.apps text {
  fill: #fff;
  font-size: 12px;
  font-weight: bold;
}

.apps .script {
  font: italic bold 9px "Liberation Serif", serif;
}

.running::after {
  content: "";
  position: absolute;
  bottom: 4px;
  width: 8px;
  height: 4px;
  border-radius: 2px;
  background: #9a9a9a;
}

.tray {
  display: flex;
  align-items: center;
  gap: 20px;
  margin-left: auto;
}

.quick {
  display: flex;
  align-items: center;
  gap: 10px;
}

.grey {
  color: #9a9a9a;
}

.blue {
  color: #0f6cc4;
}

.cloud-front {
  fill: #f2f2f2;
}

.blue .cloud-front {
  fill: #2ba5ee;
}

.tray time {
  width: 71px;
  font-size: 14px;
  line-height: 20px;
  text-align: right;
}
```
